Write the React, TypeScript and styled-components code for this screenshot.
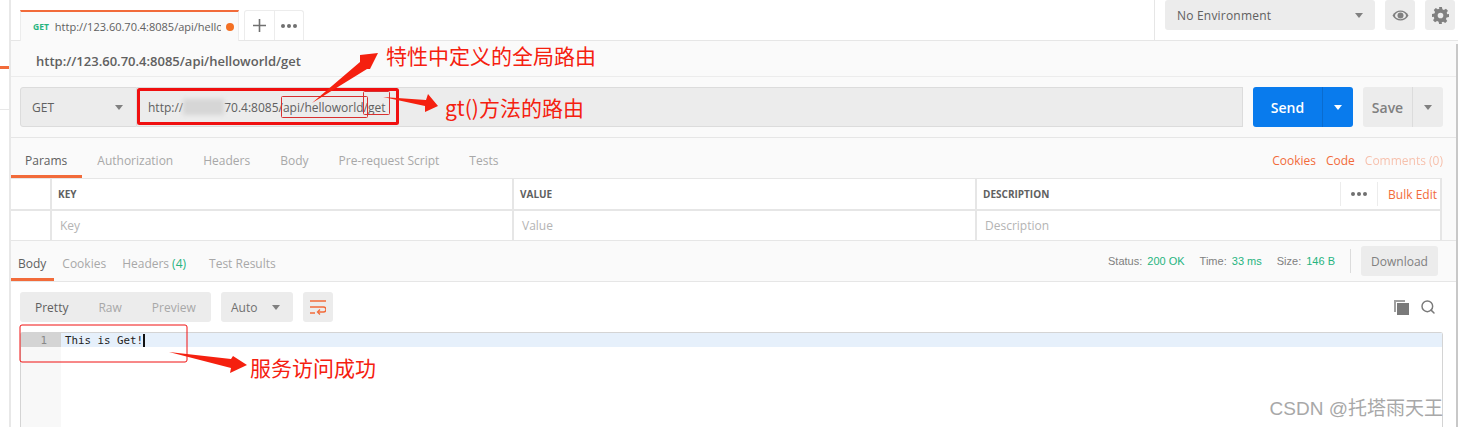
import React from "react";
import styled, { createGlobalStyle } from "styled-components";
import { Search } from "lucide-react";

const GlobalStyle = createGlobalStyle`
  html, body {
    margin: 0;
    padding: 0;
    background: #fff;
    overflow: hidden;
  }
  * { box-sizing: border-box; }
`;

const requestTabs = ["Authorization", "Headers", "Body", "Pre-request Script", "Tests"];

function App() {
  return (
    <Page>
      <GlobalStyle />
      <Sidebar>
        <SidebarAccent />
        <SidebarRule />
      </Sidebar>
      <Main>
        <TabBar>
          <ActiveTab>
            <MethodTag>GET</MethodTag>
            <TabUrl>http://123.60.70.4:8085/api/hello</TabUrl>
            <UnsavedDot />
          </ActiveTab>
          <TabActions>
            <TabAction>
              <svg width="13" height="13" viewBox="0 0 13 13">
                <path d="M6.5 0v13M0 6.5h13" stroke="#707070" strokeWidth="1.6" />
              </svg>
            </TabAction>
            <TabAction>
              <Dots />
            </TabAction>
          </TabActions>
          <EnvArea>
            <EnvSelect>
              No Environment
              <Caret />
            </EnvSelect>
            <SquareButton>
              <svg width="17" height="11" viewBox="0 0 17 11">
                <path
                  d="M.5 5.5C2.5 2 5.2.5 8.5.5s6 1.500 8 5c-2 3.500-4.700 5-8 5s-6-1.500-8-5z"
                  fill="#808080"
                />
                <ellipse cx="8.5" cy="5.500" rx="5.500" ry="3.700" fill="#ececec" />
                <circle cx="8.500" cy="5.500" r="3" fill="#808080" />
              </svg>
            </SquareButton>
            <SquareButton>
              <svg width="17" height="17" viewBox="0 0 24 24">
                <path
                  fill="#808080"
                  fillRule="evenodd"
                  d="M10 0h4l.7 3.300 2.100.9 2.900-1.800 2.800 2.800-1.800 2.900.9 2.100L24 10v4l-3.400.8-.9 2.100 1.800 2.900-2.800 2.800-2.900-1.800-2.100.9L14 24h-4l-.7-3.300-2.100-.9-2.900 1.800-2.800-2.800 1.800-2.900-.9-2.100L0 14v-4l3.400-.7.900-2.100-1.800-2.900 2.800-2.800 2.900 1.800 2.100-.9zM12 8a4 4 0 1 0 0 8 4 4 0 0 0 0-8z"
                />
              </svg>
            </SquareButton>
          </EnvArea>
        </TabBar>

        <Workspace>
          <RequestTitle>http://123.60.70.4:8085/api/helloworld/get</RequestTitle>
          <UrlRow>
            <MethodSelect>
              GET
              <Caret />
            </MethodSelect>
            <UrlInput>
              http://<Blurred />
              70.4:8085/api/helloworld/get
            </UrlInput>
            <SendButton>
              <SendLabel>Send</SendLabel>
              <SendCaret>
                <Caret $color="#fff" />
              </SendCaret>
            </SendButton>
            <SaveButton>
              <SaveLabel>Save</SaveLabel>
              <SaveCaret>
                <Caret />
              </SaveCaret>
            </SaveButton>
          </UrlRow>

          <RequestTabs>
            <RequestTab $active>Params</RequestTab>
            {requestTabs.map((name) => (
              <RequestTab key={name}>{name}</RequestTab>
            ))}
            <RequestLinks>
              <OrangeLink>Cookies</OrangeLink>
              <OrangeLink>Code</OrangeLink>
              <OrangeLink $faded>Comments (0)</OrangeLink>
            </RequestLinks>
          </RequestTabs>

          <ParamsTable>
            <HeadRow>
              <CheckCell />
              <HeadCell>KEY</HeadCell>
              <HeadCell>VALUE</HeadCell>
              <HeadCell>
                DESCRIPTION
                <TableTools>
                  <ToolSlot>
                    <Dots />
                  </ToolSlot>
                  <BulkEdit>Bulk Edit</BulkEdit>
                </TableTools>
              </HeadCell>
            </HeadRow>
            <BodyRow>
              <CheckCell />
              <BodyCell>Key</BodyCell>
              <BodyCell>Value</BodyCell>
              <BodyCell>Description</BodyCell>
            </BodyRow>
          </ParamsTable>

          <ResponseBar>
            <ResponseTab $active>Body</ResponseTab>
            <ResponseTab>Cookies</ResponseTab>
            <ResponseTab>
              Headers <Count>(4)</Count>
            </ResponseTab>
            <TestResultsTab>Test Results</TestResultsTab>
            <ResponseMeta>
              <MetaItem>
                Status: <MetaValue>200 OK</MetaValue>
              </MetaItem>
              <MetaItem>
                Time: <MetaValue>33 ms</MetaValue>
              </MetaItem>
              <MetaItem>
                Size: <MetaValue>146 B</MetaValue>
              </MetaItem>
              <MetaDivider />
              <DownloadButton>Download</DownloadButton>
            </ResponseMeta>
          </ResponseBar>

          <ResponseBody>
            <Toolbar>
              <ViewGroup>
                <ViewOption $active>Pretty</ViewOption>
                <ViewOption>Raw</ViewOption>
                <ViewOption>Preview</ViewOption>
              </ViewGroup>
              <AutoSelect>
                Auto
                <Caret />
              </AutoSelect>
              <WrapButton>
                <svg width="16" height="15" viewBox="0 0 16 15" fill="none">
                  <path
                    d="M0 1h16M0 7h13.500a2.500 2.500 0 0 1 0 5H8M0 13h5"
                    stroke="#f26b3a"
                    strokeWidth="1.500"
                  />
                  <path d="M10 9.500L7.500 12l2.500 2.500" stroke="#f26b3a" strokeWidth="1.300" />
                </svg>
              </WrapButton>
              <ToolbarIcons>
                <svg width="15" height="15" viewBox="0 0 15 15">
                  <path d="M0 0h11v2H2v10H0z" fill="#a0a0a0" />
                  <path d="M3 3h12v12H3z" fill="#7a7a7a" />
                </svg>
                <Search size={16} color="#7a7a7a" strokeWidth={2.2} />
              </ToolbarIcons>
            </Toolbar>
            <Editor>
              <Gutter>
                <LineNumber>1</LineNumber>
              </Gutter>
              <CodeArea>
                <CodeLine>
                  This is Get!
                  <Cursor />
                </CodeLine>
              </CodeArea>
            </Editor>
          </ResponseBody>
        </Workspace>
      </Main>
      <ScrollStrip />

      <Overlay width="1458" height="427" viewBox="0 0 1458 427">
        <rect x="138.500" y="89.500" width="259" height="34" rx="1" fill="none" stroke="#f01010" strokeWidth="3" />
        <rect x="281.500" y="96.500" width="86" height="21" rx="1" fill="none" stroke="#d83030" strokeWidth="1" />
        <rect x="363.500" y="91.500" width="26" height="23" rx="1" fill="none" stroke="#d83030" strokeWidth="1" />
        <rect x="20" y="325" width="167" height="37" rx="2" fill="none" stroke="#f01010" strokeWidth="1" />
        <polygon points="312,103 360,62 360,55 378,53 370,69 367,69" fill="#f5200f" />
        <polygon points="383,97 426,100 428,94 438,106 425,112 425,106" fill="#f5200f" />
        <polygon points="169,352 231,359 233,356 247,365 230,373 231,368" fill="#f5200f" />
      </Overlay>
      <Note $left={386} $top={41} $size={21}>
        特性中定义的全局路由
      </Note>
      <Note $left={445} $top={93} $size={21}>
        gt()方法的路由
      </Note>
      <Note $left={250} $top={353} $size={21}>
        服务访问成功
      </Note>
      <Watermark>CSDN @托塔雨天王</Watermark>
    </Page>
  );
}

export default App;

const Page = styled.div`
  position: relative;
  display: flex;
  width: 1458px;
  height: 427px;
  overflow: hidden;
  background: #fff;
  color: #606060;
  font-family: "Open Sans", "Noto Sans CJK SC", sans-serif;
  font-size: 12px;
`;

const Sidebar = styled.div`
  flex: 0 0 11px;
  display: flex;
  flex-direction: column;
  border-right: 2px solid #e8e8e8;
`;

const SidebarAccent = styled.div`
  height: 3px;
  margin-top: 66px;
  background: #f26b3a;
`;

const SidebarRule = styled.div`
  height: 1px;
  margin-top: 40px;
  background: #e8e8e8;
`;

const Main = styled.div`
  flex: 1;
  min-width: 0;
  display: flex;
  flex-direction: column;
`;

const TabBar = styled.div`
  height: 41px;
  display: flex;
  align-items: flex-start;
  padding: 10px 0 0 9px;
  border-bottom: 1px solid #e6e6e6;
`;

const ActiveTab = styled.div`
  width: 219px;
  height: 31px;
  margin-bottom: -1px;
  display: flex;
  align-items: center;
  padding: 0 0 0 12px;
  background: #fafafa;
  border-top: 2px solid #f26b3a;
  border-left: 1px solid #ececec;
  border-right: 1px solid #ececec;
`;

const MethodTag = styled.span`
  font-size: 8.500px;
  font-weight: 700;
  color: #26b47f;
  margin-right: 6px;
`;

const TabUrl = styled.span`
  width: 166px;
  overflow: hidden;
  white-space: nowrap;
  font-size: 11px;
`;

const UnsavedDot = styled.span`
  width: 8px;
  height: 8px;
  margin-left: 5px;
  border-radius: 50%;
  background: #f47023;
`;

const TabActions = styled.div`
  display: flex;
  height: 30px;
  margin-left: 5px;
  border: 1px solid #ececec;
  border-bottom: none;
  border-radius: 3px 3px 0 0;
`;

const TabAction = styled.div`
  width: 29px;
  display: flex;
  align-items: center;
  justify-content: center;
  & + & {
    border-left: 1px solid #ececec;
  }
`;

const DotsWrap = styled.span`
  display: inline-flex;
  gap: 2px;
`;

const Dot = styled.i`
  width: 4px;
  height: 4px;
  border-radius: 50%;
  background: #707070;
`;

const Dots = () => (
  <DotsWrap>
    <Dot />
    <Dot />
    <Dot />
  </DotsWrap>
);

const EnvArea = styled.div`
  margin-left: auto;
  margin-top: -10px;
  height: 40px;
  display: flex;
  gap: 10px;
  padding-left: 10px;
  padding-right: 3px;
  border-left: 1px solid #e6e6e6;
`;

const EnvSelect = styled.div`
  width: 210px;
  height: 30px;
  display: flex;
  align-items: center;
  justify-content: space-between;
  padding: 0 12px;
  background: #ececec;
  border-radius: 3px;
  letter-spacing: 0.2px;
`;

const Caret = styled.span<{ $color?: string }>`
  width: 0;
  height: 0;
  border-left: 4.500px solid transparent;
  border-right: 4.500px solid transparent;
  border-top: 5px solid ${({ $color }) => $color || "#808080"};
`;

const SquareButton = styled.div`
  width: 30px;
  height: 30px;
  display: flex;
  align-items: center;
  justify-content: center;
  background: #ececec;
  border-radius: 3px;
`;

const Workspace = styled.div`
  flex: 1;
  min-height: 0;
  background: #fafafa;
`;

const RequestTitle = styled.div`
  height: 36px;
  display: flex;
  align-items: center;
  padding: 5px 0 0 25px;
  font-size: 13px;
  font-weight: 600;
  border-bottom: 1px solid #ececec;
`;

const UrlRow = styled.div`
  height: 61px;
  display: flex;
  align-items: center;
  padding: 0 15px 0 9px;
  border-bottom: 1px solid #e6e6e6;
`;

const MethodSelect = styled.div`
  width: 117px;
  height: 40px;
  display: flex;
  align-items: center;
  justify-content: space-between;
  padding: 0 13px 0 11px;
  background: #ececec;
  border: 1px solid #dcdcdc;
  border-radius: 3px 0 0 3px;
`;

const UrlInput = styled.div`
  width: 1106px;
  height: 40px;
  display: flex;
  align-items: center;
  padding-left: 11px;
  font-size: 12px;
  background: #ececec;
  border: 1px solid #dcdcdc;
  border-left: none;
  white-space: pre;
`;

const Blurred = styled.span`
  width: 41px;
  height: 16px;
  background: #d6d6d6;
  filter: blur(2px);
`;

const SendButton = styled.div`
  width: 100px;
  height: 40px;
  margin-left: 10px;
  display: flex;
  background: #097bed;
  border-radius: 3px;
  color: #fff;
  font-size: 14px;
  font-weight: 600;
`;

const SendLabel = styled.div`
  width: 69px;
  display: flex;
  align-items: center;
  justify-content: center;
`;

const SendCaret = styled.div`
  flex: 1;
  display: flex;
  align-items: center;
  justify-content: center;
  border-left: 1px solid #0a6ccf;
`;

const SaveButton = styled.div`
  width: 80px;
  height: 40px;
  margin-left: 10px;
  display: flex;
  background: #ececec;
  border-radius: 3px;
  color: #808080;
  font-size: 14px;
  font-weight: 600;
`;

const SaveLabel = styled.div`
  width: 49px;
  display: flex;
  align-items: center;
  justify-content: center;
`;

const SaveCaret = styled(SendCaret)`
  border-left: 1px solid #dcdcdc;
`;

const RequestTabs = styled.div`
  height: 40px;
  display: flex;
  padding-right: 15px;
`;

const RequestTab = styled.div<{ $active?: boolean }>`
  height: 40px;
  display: flex;
  align-items: center;
  padding: 7px 15px 0;
  font-size: 12px;
  color: ${({ $active }) => ($active ? "#606060" : "#a8a8a8")};
  border-bottom: 3px solid ${({ $active }) => ($active ? "#f26b3a" : "transparent")};
  &:first-child {
    padding-left: 14px;
  }
`;

const RequestLinks = styled.div`
  margin-left: auto;
  display: flex;
  align-items: center;
  gap: 10px;
  padding-top: 5px;
`;

const OrangeLink = styled.span<{ $faded?: boolean }>`
  font-size: 12px;
  color: #f26b3a;
  opacity: ${({ $faded }) => ($faded ? 0.4 : 1)};
`;

const ParamsTable = styled.div`
  display: flex;
  flex-direction: column;
  gap: 2px;
  margin-right: 16px;
  background: #e6e6e6;
  border-top: 1px solid #e6e6e6;
`;

const HeadRow = styled.div`
  display: grid;
  grid-template-columns: 39px 460px 461px 463px;
  gap: 2px;
  height: 30px;
`;

const BodyRow = styled(HeadRow)`
  height: 29px;
`;

const CheckCell = styled.div`
  background: #fff;
`;

const HeadCell = styled.div`
  position: relative;
  display: flex;
  align-items: center;
  padding-left: 6px;
  background: #fff;
  font-size: 10px;
  font-weight: 700;
`;

const BodyCell = styled.div`
  display: flex;
  align-items: center;
  padding-left: 8px;
  background: #fff;
  font-size: 12px;
  color: #b4b4b4;
`;

const TableTools = styled.div`
  position: absolute;
  top: 3px;
  right: 3px;
  display: flex;
  height: 24px;
  align-items: center;
`;

const ToolSlot = styled.div`
  width: 38px;
  height: 24px;
  display: flex;
  align-items: center;
  justify-content: center;
  border-left: 1px solid #ececec;
  border-right: 1px solid #ececec;
`;

const BulkEdit = styled.span`
  padding-left: 10px;
  font-size: 12px;
  font-weight: 400;
  color: #f26b3a;
`;

const ResponseBar = styled.div`
  height: 42px;
  display: flex;
  padding: 0 20px 0 0;
  border-top: 1px solid #e6e6e6;
  border-bottom: 1px solid #e6e6e6;
`;

const ResponseTab = styled.div<{ $active?: boolean }>`
  display: flex;
  align-items: center;
  gap: 3px;
  padding: 8px 8px 0;
  font-size: 12px;
  color: ${({ $active }) => ($active ? "#606060" : "#a8a8a8")};
  border-bottom: 3px solid ${({ $active }) => ($active ? "#f26b3a" : "transparent")};
  &:first-child {
    padding-left: 7px;
  }
`;

const TestResultsTab = styled(ResponseTab)`
  margin-left: 7px;
`;

const Count = styled.span`
  color: #26b47f;
`;

const ResponseMeta = styled.div`
  margin-left: auto;
  display: flex;
  align-items: center;
  gap: 15px;
`;

const MetaItem = styled.span`
  font-family: "Liberation Sans", sans-serif;
  font-size: 11px;
  color: #808080;
`;

const MetaValue = styled.span`
  margin-left: 2px;
  color: #26b47f;
`;

const MetaDivider = styled.span`
  width: 1px;
  height: 24px;
  background: #dcdcdc;
`;

const DownloadButton = styled.div`
  width: 77px;
  height: 30px;
  margin-left: -5px;
  display: flex;
  align-items: center;
  justify-content: center;
  background: #ececec;
  border-radius: 3px;
  font-size: 12px;
  color: #808080;
`;

const ResponseBody = styled.div`
  height: 145px;
  padding: 10px 15px 0 9px;
  background: #fff;
`;

const Toolbar = styled.div`
  height: 30px;
  display: flex;
  gap: 10px;
`;

const ViewGroup = styled.div`
  width: 191px;
  display: flex;
  align-items: center;
  padding-left: 15px;
  gap: 30px;
  background: #ececec;
  border-radius: 3px;
`;

const ViewOption = styled.span<{ $active?: boolean }>`
  font-size: 12px;
  color: ${({ $active }) => ($active ? "#606060" : "#a8a8a8")};
`;

const AutoSelect = styled.div`
  width: 72px;
  display: flex;
  align-items: center;
  justify-content: space-between;
  padding: 0 13px 0 10px;
  background: #ececec;
  border-radius: 3px;
  font-size: 12px;
  color: #707070;
`;

const WrapButton = styled.div`
  width: 30px;
  display: flex;
  align-items: center;
  justify-content: center;
  background: #ececec;
  border-radius: 3px;
`;

const ToolbarIcons = styled.div`
  margin-left: auto;
  display: flex;
  align-items: center;
  gap: 11px;
  padding-right: 7px;
`;

const Editor = styled.div`
  height: 110px;
  margin-top: 10px;
  display: flex;
  border: 1px solid #d4d4d4;
  border-bottom: none;
  border-radius: 3px 3px 0 0;
`;

const Gutter = styled.div`
  width: 40px;
  background: #f8f8f8;
`;

const LineNumber = styled.div`
  height: 14px;
  padding: 1px 14px 0 0;
  text-align: right;
  background: #d4d4d4;
  font-family: "DejaVu Sans Mono", monospace;
  font-size: 10.800px;
  line-height: 13px;
  color: #888;
`;

const CodeArea = styled.div`
  flex: 1;
`;

const CodeLine = styled.div`
  height: 14px;
  display: flex;
  padding: 1px 0 0 4px;
  background: #e6f0fb;
  font-family: "DejaVu Sans Mono", monospace;
  font-size: 10.800px;
  line-height: 13px;
  color: #222;
  white-space: pre;
`;

const Cursor = styled.span`
  width: 2px;
  height: 13px;
  background: #111;
`;

const ScrollStrip = styled.div`
  position: absolute;
  top: 44px;
  right: 0;
  bottom: 0;
  width: 2px;
  background: #c8c8c8;
`;

const Overlay = styled.svg`
  position: absolute;
  top: 0;
  left: 0;
  pointer-events: none;
`;

const Note = styled.div<{ $left: number; $top: number; $size: number }>`
  position: absolute;
  left: ${({ $left }) => $left}px;
  top: ${({ $top }) => $top}px;
  font-family: "Noto Sans CJK SC", "Liberation Sans", sans-serif;
  font-size: ${({ $size }) => $size}px;
  line-height: 28px;
  color: #f5200f;
  white-space: nowrap;
`;

const Watermark = styled.div`
  position: absolute;
  right: 15px;
  top: 395px;
  font-family: "Liberation Sans", "Noto Sans CJK SC", sans-serif;
  font-size: 19px;
  line-height: 28px;
  color: #a8a8a8;
  white-space: nowrap;
`;
